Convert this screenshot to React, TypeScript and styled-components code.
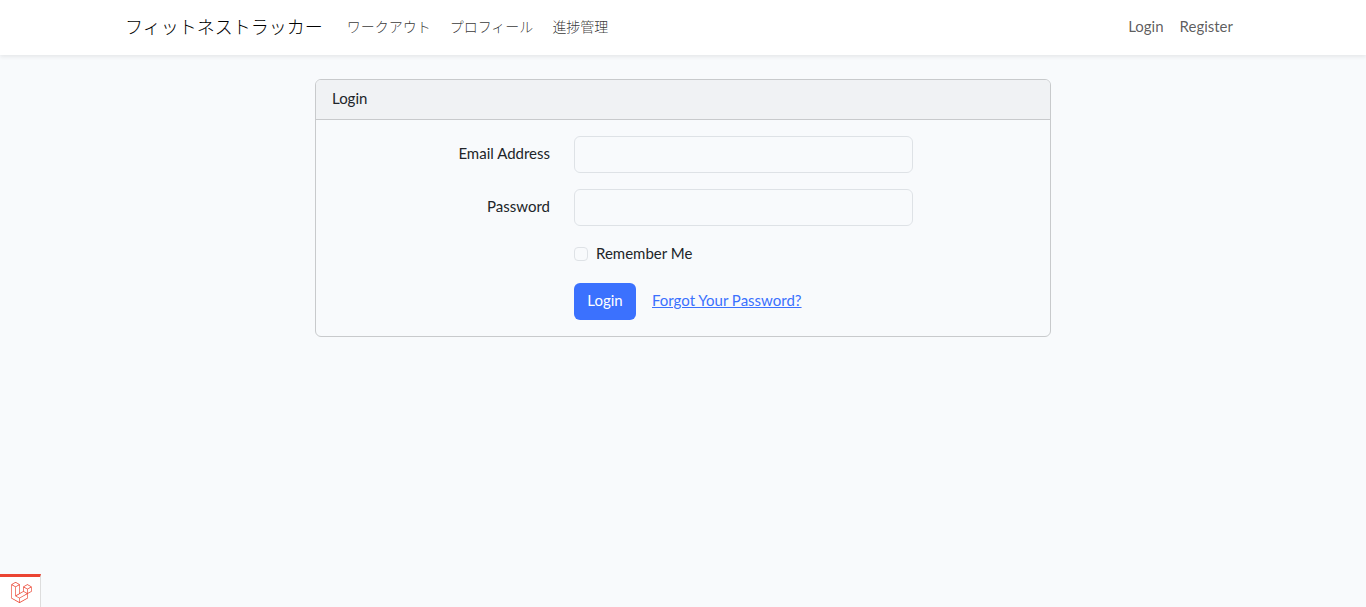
import React from 'react';
import styled, { createGlobalStyle } from 'styled-components';
import { SiLaravel } from 'react-icons/si';

const GlobalStyle = createGlobalStyle`
  *, *::before, *::after { box-sizing: border-box; }
  body {
    margin: 0;
    background: #f8fafc;
    color: #212529;
    font-family: Lato, "Noto Sans CJK JP", sans-serif;
    font-size: 15px;
    line-height: 23px;
  }
`;

const Navbar = styled.nav`
  background: #fff;
  padding: 8px 0;
  box-shadow: 0 2px 4px rgba(0, 0, 0, 0.075);
`;

const Container = styled.div`
  max-width: 1140px;
  min-height: 39px;
  margin: 0 auto;
  padding: 0 12px;
  display: flex;
  align-items: center;
`;

const Brand = styled.a`
  margin-right: 16px;
  color: #000;
  font-size: 18px;
  font-weight: 300;
  text-decoration: none;
  white-space: nowrap;
`;

const NavList = styled.ul<{ $end?: boolean; $gap?: number }>`
  display: flex;
  gap: ${({ $gap = 0 }) => $gap}px;
  margin: 0;
  margin-left: ${({ $end }) => ($end ? 'auto' : '0')};
  padding: 0;
  list-style: none;
`;

const NavLink = styled.a<{ $japanese?: boolean }>`
  display: block;
  padding: 7px 8px 9px;
  color: ${({ $japanese }) => ($japanese ? 'rgba(0, 0, 0, 0.8)' : 'rgba(0, 0, 0, 0.65)')};
  font-size: ${({ $japanese }) => ($japanese ? 14 : 15)}px;
  font-weight: ${({ $japanese }) => ($japanese ? 300 : 400)};
  text-decoration: none;
  white-space: nowrap;
`;

const Main = styled.main`
  max-width: 760px;
  margin: 0 auto;
  padding: 24px 12px;
`;

const Card = styled.section`
  border: 1px solid #c8cacc;
  border-radius: 6px;
  overflow: hidden;
`;

const CardHeader = styled.header`
  padding: 7px 16px 9px;
  background: #f0f2f4;
  border-bottom: 1px solid #c8cacc;
`;

const Form = styled.form`
  display: grid;
  gap: 16px;
  padding: 16px;
`;

const Row = styled.div`
  display: grid;
  grid-template-columns: repeat(12, minmax(0, 1fr));
  column-gap: 24px;
  align-items: center;
`;

const Label = styled.label`
  grid-column: span 4;
  padding-bottom: 2px;
  text-align: right;
`;

const TextInput = styled.input`
  grid-column: span 6;
  width: 100%;
  height: 37px;
  padding: 6px 12px;
  border: 1px solid #dee2e6;
  border-radius: 6px;
  background: #f8fafc;
  color: inherit;
  font: inherit;
`;

const Offset = styled.div`
  grid-column: 5 / -1;
  display: flex;
  align-items: center;
`;

const CheckLabel = styled.label`
  display: flex;
  align-items: center;
  gap: 8px;
  min-height: 25px;
  padding-bottom: 2px;
`;

const Checkbox = styled.input`
  appearance: none;
  width: 14px;
  height: 14px;
  margin: 0;
  border: 1px solid #dee2e6;
  border-radius: 4px;
  background: #f8fafc;

  &:checked { background: #3b71fe; }
`;

const SubmitButton = styled.button`
  min-width: 62px;
  height: 37px;
  padding: 6px 13px 8px;
  border: 0;
  border-radius: 6px;
  background: #3b71fe;
  color: #fff;
  font: inherit;
`;

const ForgotLink = styled.a`
  margin-left: 16px;
  padding-bottom: 2px;
  color: #3b71fe;
`;

const DebugTab = styled.button`
  position: fixed;
  bottom: 0;
  left: 0;
  display: flex;
  align-items: center;
  justify-content: center;
  width: 41px;
  height: 33px;
  padding: 0 0 0 2px;
  border: 0;
  border-top: 3px solid #eb4432;
  border-right: 1px solid #ddd;
  background: #fff;
  color: #eb4432;
`;

export default function App() {
  return (
    <>
      <GlobalStyle />
      <Navbar>
        <Container>
          <Brand href="#">フィットネストラッカー</Brand>
          <NavList $gap={3}>
            <li><NavLink $japanese href="#">ワークアウト</NavLink></li>
            <li><NavLink $japanese href="#">プロフィール</NavLink></li>
            <li><NavLink $japanese href="#">進捗管理</NavLink></li>
          </NavList>
          <NavList $end>
            <li><NavLink href="#">Login</NavLink></li>
            <li><NavLink href="#">Register</NavLink></li>
          </NavList>
        </Container>
      </Navbar>
      <Main>
        <Card>
          <CardHeader>Login</CardHeader>
          <Form onSubmit={(event) => event.preventDefault()}>
            <Row>
              <Label htmlFor="email">Email Address</Label>
              <TextInput id="email" type="email" autoComplete="email" />
            </Row>
            <Row>
              <Label htmlFor="password">Password</Label>
              <TextInput id="password" type="password" autoComplete="current-password" />
            </Row>
            <Row>
              <Offset>
                <CheckLabel htmlFor="remember">
                  <Checkbox id="remember" type="checkbox" />
                  Remember Me
                </CheckLabel>
              </Offset>
            </Row>
            <Row>
              <Offset>
                <SubmitButton type="submit">Login</SubmitButton>
                <ForgotLink href="#">Forgot Your Password?</ForgotLink>
              </Offset>
            </Row>
          </Form>
        </Card>
      </Main>
      <DebugTab type="button" aria-label="Debug bar">
        <SiLaravel size={21} />
      </DebugTab>
    </>
  );
}
